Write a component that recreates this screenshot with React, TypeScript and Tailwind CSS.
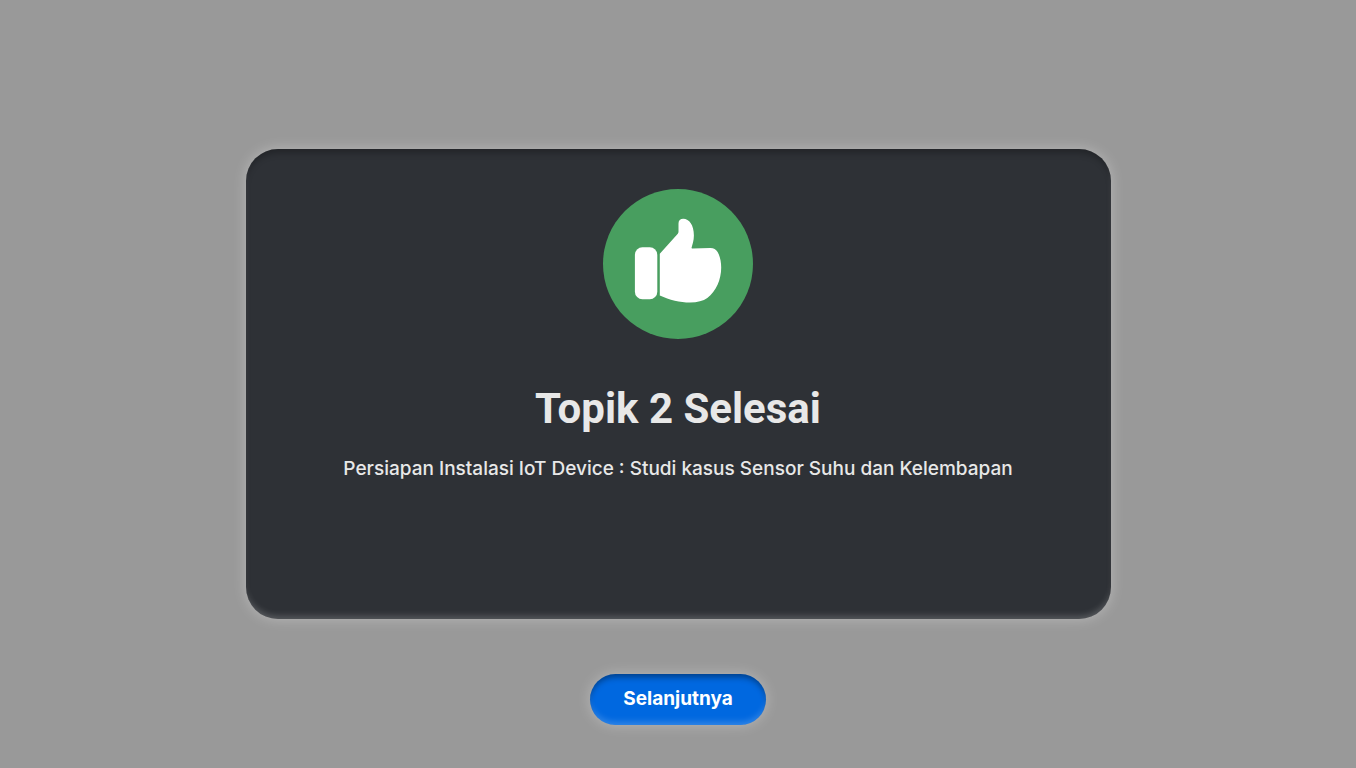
function ThumbsUpBadge() {
  return (
    <svg viewBox="0 0 150 150" className="size-[150px] shrink-0" aria-hidden="true">
      <circle cx="75" cy="75" r="75" fill="#489e5f" />
      <rect x="31.9" y="58.3" width="22.4" height="52" rx="7.5" fill="#fff" />
      <path
        fill="#fff"
        d="M56.8 64.7 L74.8 44.8 Q75.5 44 75.5 42.8 V34.5 C75.5 31.5 77.2 29.8 80.3 29.8 C86.2 29.8 90.9 36 90.9 46.5 C90.9 52 89.3 55.8 88.6 58.4 Q88.4 59.6 89.8 59.6 L107 58.9 C110.6 58.8 112.8 59.8 114.6 62.9 C117.1 67.2 118.2 73 118.2 78.6 C118.2 90.5 113.2 102.6 104.3 109 C100.3 112 94.5 113.4 87 113.4 C77 113.4 66.5 110.8 56.8 106.4 Z"
      />
    </svg>
  );
}

export default function App() {
  return (
    <main className="flex min-h-screen flex-col items-center bg-[#999999] px-6 pt-[149px] pb-[43px] font-['Inter',sans-serif]">
      <section className="flex min-h-[470px] w-full max-w-[865px] flex-col items-center rounded-[32px] bg-[#2e3136] px-6 pt-10 text-center text-[#e8e8e8] shadow-[0_0_14px_rgba(255,255,255,0.3),inset_0_6px_6px_-2px_rgba(0,0,0,0.25),inset_0_-5px_6px_-2px_rgba(255,255,255,0.2)]">
        <ThumbsUpBadge />
        <h1 className="mt-11 font-['Roboto',sans-serif] text-[42px] leading-[52px] font-bold">
          Topik 2 Selesai
        </h1>
        <p className="mt-5 text-[19px] leading-7 font-medium">
          Persiapan Instalasi IoT Device : Studi kasus Sensor Suhu dan Kelembapan
        </p>
      </section>
      <button
        type="button"
        className="mt-[55px] h-[51px] w-44 cursor-pointer rounded-full bg-[#0068e0] text-[19px] font-bold text-white shadow-[0_0_14px_rgba(255,255,255,0.3),inset_0_5px_6px_-2px_rgba(0,0,0,0.4),inset_0_-5px_6px_-2px_rgba(255,255,255,0.2)]"
      >
        Selanjutnya
      </button>
    </main>
  );
}
